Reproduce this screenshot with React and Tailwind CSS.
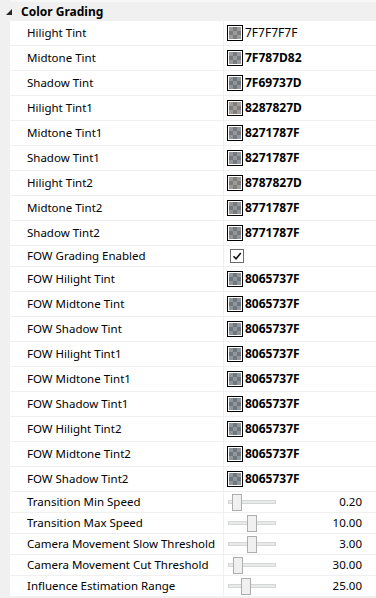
import React from 'react';

const FONT = { fontFamily: '"Noto Sans", "Segoe UI", sans-serif' };

const colorRows = [
  ['Hilight Tint', '7F7F7F7F', false],
  ['Midtone Tint', '7F787D82', true],
  ['Shadow Tint', '7F69737D', true],
  ['Hilight Tint1', '8287827D', true],
  ['Midtone Tint1', '8271787F', true],
  ['Shadow Tint1', '8271787F', true],
  ['Hilight Tint2', '8787827D', true],
  ['Midtone Tint2', '8771787F', true],
  ['Shadow Tint2', '8771787F', true],
];

const fowRows = [
  'FOW Hilight Tint',
  'FOW Midtone Tint',
  'FOW Shadow Tint',
  'FOW Hilight Tint1',
  'FOW Midtone Tint1',
  'FOW Shadow Tint1',
  'FOW Hilight Tint2',
  'FOW Midtone Tint2',
  'FOW Shadow Tint2',
].map((n) => [n, '8065737F', true]);

const sliderRows = [
  ['Transition Min Speed', '0.20', 4],
  ['Transition Max Speed', '10.00', 19],
  ['Camera Movement Slow Threshold', '3.00', 19],
  ['Camera Movement Cut Threshold', '30.00', 5],
  ['Influence Estimation Range', '25.00', 13],
];

function Swatch({ argb }) {
  const a = parseInt(argb.slice(0, 2), 16) / 255;
  const r = parseInt(argb.slice(2, 4), 16);
  const g = parseInt(argb.slice(4, 6), 16);
  const b = parseInt(argb.slice(6, 8), 16);
  const cells = [];
  for (let y = 0; y < 3; y++) {
    for (let x = 0; x < 3; x++) {
      cells.push(
        <rect key={`${x}-${y}`} x={x * 4} y={y * 4} width="4" height="4" fill={(x + y) % 2 ? '#7a7a7a' : '#b8b8b8'} />
      );
    }
  }
  return (
    <div className="w-[16px] h-[16px] border border-black bg-white p-[1px] shrink-0">
      <svg width="12" height="12" viewBox="0 0 12 12" className="block">
        {cells}
        <rect x="0" y="0" width="12" height="12" fill={`rgb(${r},${g},${b})`} fillOpacity={a} />
      </svg>
    </div>
  );
}

function Row({ label, h = 'h-[25px]', children }) {
  return (
    <div className={`flex ${h} border-b border-[#f0f0f0] bg-white`}>
      <div className="w-[214px] shrink-0 pl-[17px] flex items-center overflow-hidden whitespace-nowrap border-r border-[#f0f0f0]">
        {label}
      </div>
      <div className="flex-1 flex items-center min-w-0">{children}</div>
    </div>
  );
}

function ColorRow({ label, value, bold }) {
  return (
    <Row label={label}>
      <div className="pl-[3px] flex items-center">
        <Swatch argb={value} />
        <span className={`ml-[2px] text-[12px] ${bold ? 'font-bold' : ''}`}>{value}</span>
      </div>
    </Row>
  );
}

function Slider({ offset }) {
  return (
    <div className="relative w-[48px] h-[17px] ml-[4px]">
      <div className="absolute left-0 right-0 top-[6px] h-[4px] bg-[#e7eaea] border border-[#d6d6d6]" />
      <div
        className="absolute top-0 w-[10px] h-[17px] bg-[#f0f0f0] border border-[#adadad]"
        style={{ left: offset }}
      />
    </div>
  );
}

export default function App() {
  return (
    <div className="w-[376px] h-[598px] bg-[#f0f0f0] overflow-hidden text-[11.5px] text-black" style={FONT}>
      <div className="pl-[10px]">
        <div className="h-[2px] bg-[#f7f7f7]" />
        <div className="h-[19px] flex items-center relative">
          <svg width="6" height="6" viewBox="0 0 6 6" className="absolute left-[-4px] top-[7px]">
            <polygon points="6,0 6,6 0,6" fill="#262626" />
          </svg>
          <span className="pl-[11px] font-bold text-[12px]">Color Grading</span>
        </div>
        {colorRows.map(([l, v, b]) => (
          <ColorRow key={l} label={l} value={v} bold={b} />
        ))}
        <Row label="FOW Grading Enabled" h="h-[21px]">
          <div className="ml-[6px] w-[14px] h-[14px] border border-[#6b6b6b] bg-white flex items-center justify-center">
            <svg width="10" height="10" viewBox="0 0 10 10">
              <path d="M1.5 5.2 L4 7.8 L8.8 2" fill="none" stroke="#111" strokeWidth="1.6" />
            </svg>
          </div>
        </Row>
        {fowRows.map(([l, v, b]) => (
          <ColorRow key={l} label={l} value={v} bold={b} />
        ))}
        {sliderRows.map(([l, v, o]) => (
          <Row key={l} label={l} h="h-[21px]">
            <Slider offset={o} />
            <span className="ml-auto pr-[14px]">{v}</span>
          </Row>
        ))}
      </div>
    </div>
  );
}
